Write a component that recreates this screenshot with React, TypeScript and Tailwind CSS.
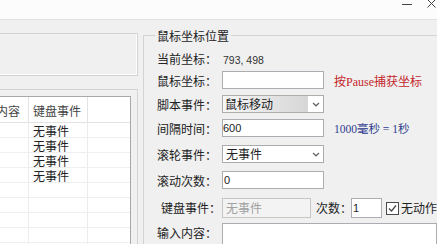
import React from "react";

function Label({ children, className = "" }: { children: React.ReactNode; className?: string }) {
  return (
    <span className={"w-[65px] h-[18px] shrink-0 whitespace-nowrap leading-[22px] text-[12px] text-[#222] " + className}>
      {children}
    </span>
  );
}

function Chevron() {
  return (
    <svg width="8" height="5" viewBox="0 0 8 5">
      <polyline points="1,1 4,3.8 7,1" fill="none" stroke="#666" strokeWidth="1.3" />
    </svg>
  );
}

export default function App() {
  const rows = ["无事件", "无事件", "无事件", "无事件", "", "", "", "", ""];
  return (
    <div className="w-[437px] h-[244px] overflow-hidden bg-[#f0f0f0] font-['Liberation_Sans','Noto_Sans_CJK_SC',sans-serif] text-[12px] text-[#222] flex flex-col">
      {/* title bar */}
      <div className="h-[20px] shrink-0 bg-[#fcfcfd] border-b border-[#e2e2e2] flex justify-end items-start pr-[1px]">
        <svg width="10" height="8" className="mr-[15px]">
          <line x1="0" y1="4.5" x2="10" y2="4.5" stroke="#444" strokeWidth="1" />
        </svg>
        <svg width="9" height="9" className="-mt-[1px]">
          <path d="M0.5 0.5 L8.5 8.5 M8.5 0.5 L0.5 8.5" stroke="#444" strokeWidth="1" fill="none" />
        </svg>
      </div>

      {/* body */}
      <div className="flex flex-1 min-h-0 overflow-hidden">
        {/* left column */}
        <div className="w-[138px] shrink-0 flex flex-col">
          <div className="mt-[13px] h-[43px] border-y border-r border-[#d3d3d3] shadow-[inset_-1px_-1px_0_#fff]" />
          <div className="mt-[13px] flex-1 min-h-0 border-t border-r border-[#d3d3d3] pt-[6px] pr-[6px] flex flex-col">
            <div className="flex-1 min-h-0 overflow-hidden bg-white border-t border-r border-[#a8a8a8]">
              <div className="h-[26px] flex border-b border-[#e3e3e3] text-[#444] leading-[29px]">
                <div className="w-[29px] shrink-0 border-r border-[#e3e3e3] flex justify-end pt-[1px] pr-[8px] overflow-hidden whitespace-nowrap">
                  内容
                </div>
                <div className="w-[59px] shrink-0 border-r border-[#e3e3e3] pt-[1px] pl-[4px] whitespace-nowrap">
                  键盘事件
                </div>
                <div className="flex-1" />
              </div>
              {rows.map((r, i) => (
                <div key={i} className="h-[15px] flex border-b border-[#efefef] leading-[19px] text-[#222]">
                  <div className="w-[29px] shrink-0 border-r border-[#ececec]" />
                  <div className="w-[59px] shrink-0 border-r border-[#ececec] pl-[4px] whitespace-nowrap">{r}</div>
                  <div className="flex-1" />
                </div>
              ))}
            </div>
          </div>
        </div>

        {/* right group */}
        <fieldset className="ml-[5px] -mr-[20px] flex-1 mt-[7px] border border-[#d3d3d3] pl-[13px] self-start">
          <legend className="-ml-[2px] px-[2px] h-[16px] leading-[20px] text-[12px] text-[#222]">鼠标坐标位置</legend>
          <div className="flex flex-col">
            <div className="mt-[6px] h-[18px] flex items-center">
              <Label>当前坐标：</Label>
              <span className="ml-[1px] h-[18px] leading-[22px] text-[10.5px] text-[#333]">793, 498</span>
            </div>

            <div className="mt-[4px] h-[18px] flex items-center">
              <Label>鼠标坐标：</Label>
              <div className="w-[102px] h-[18px] border border-[#abadb3] bg-white" />
              <span className="ml-[10px] h-[18px] leading-[22px] whitespace-nowrap text-[12px] text-[#c4262b] font-['Liberation_Serif','Noto_Sans_CJK_SC',serif]">
                按Pause捕获坐标
              </span>
            </div>

            <div className="mt-[6px] h-[18px] flex items-center">
              <Label>脚本事件：</Label>
              <div className="w-[102px] h-[18px] border border-[#acacac] bg-white flex items-stretch">
                <span className="flex-1 bg-gradient-to-r from-[#f6f6f6] to-[#d6d6d6] pl-[2px] leading-[19px] text-[12px] text-[#222] whitespace-nowrap">
                  鼠标移动
                </span>
                <span className="w-[15px] flex items-center justify-center">
                  <Chevron />
                </span>
              </div>
            </div>

            <div className="mt-[6px] h-[18px] flex items-center">
              <Label>间隔时间：</Label>
              <div className="w-[102px] h-[18px] border border-[#abadb3] bg-white text-[11px] leading-[17px] text-[#222]">
                600
              </div>
              <span className="ml-[10px] h-[18px] leading-[21px] whitespace-nowrap text-[11.5px] text-[#2f3c8e] font-['Liberation_Serif','Noto_Sans_CJK_SC',serif]">
                1000毫秒 = 1秒
              </span>
            </div>

            <div className="mt-[8px] h-[18px] flex items-center">
              <Label>滚轮事件：</Label>
              <div className="w-[102px] h-[18px] border border-[#acacac] bg-white flex items-stretch">
                <span className="flex-1 pl-[3px] leading-[19px] text-[12px] text-[#222] whitespace-nowrap">无事件</span>
                <span className="w-[15px] flex items-center justify-center">
                  <Chevron />
                </span>
              </div>
            </div>

            <div className="mt-[8px] h-[18px] flex items-center">
              <Label>滚动次数：</Label>
              <div className="w-[102px] h-[18px] border border-[#abadb3] bg-white text-[11px] leading-[17px] pl-[1px] text-[#222]">
                0
              </div>
            </div>

            <div className="mt-[9px] h-[20px] flex items-center">
              <Label className="pl-[4px] h-[20px] leading-[23px]">键盘事件：</Label>
              <div className="w-[89px] h-[20px] border border-[#c6c6c6] bg-[#f3f3f3] pl-[3px] leading-[20px] text-[12px] text-[#a0a0a0] whitespace-nowrap">
                无事件
              </div>
              <span className="ml-[5px] w-[35px] h-[20px] leading-[22px] shrink-0 whitespace-nowrap text-[12px] text-[#222]">次数：</span>
              <div className="w-[31px] h-[20px] border border-[#abadb3] bg-white text-[11px] leading-[19px] pl-[1px] text-[#222]">
                1
              </div>
              <svg width="13" height="13" viewBox="0 0 13 13" className="ml-[4px] mt-[1px] shrink-0">
                <rect x="0.5" y="0.5" width="12" height="12" fill="#fff" stroke="#4a4a4a" />
                <polyline points="3,6.5 5.5,9 10,3.5" fill="none" stroke="#444" strokeWidth="1.2" />
              </svg>
              <span className="ml-[2px] h-[20px] leading-[22px] whitespace-nowrap text-[12px] text-[#222]">无动作</span>
            </div>

            <div className="mt-[5px] flex items-start">
              <Label className="h-[16px] leading-[16px]">输入内容：</Label>
              <div className="w-[215px] h-[40px] border border-[#abadb3] bg-white" />
            </div>
          </div>
        </fieldset>
      </div>
    </div>
  );
}
